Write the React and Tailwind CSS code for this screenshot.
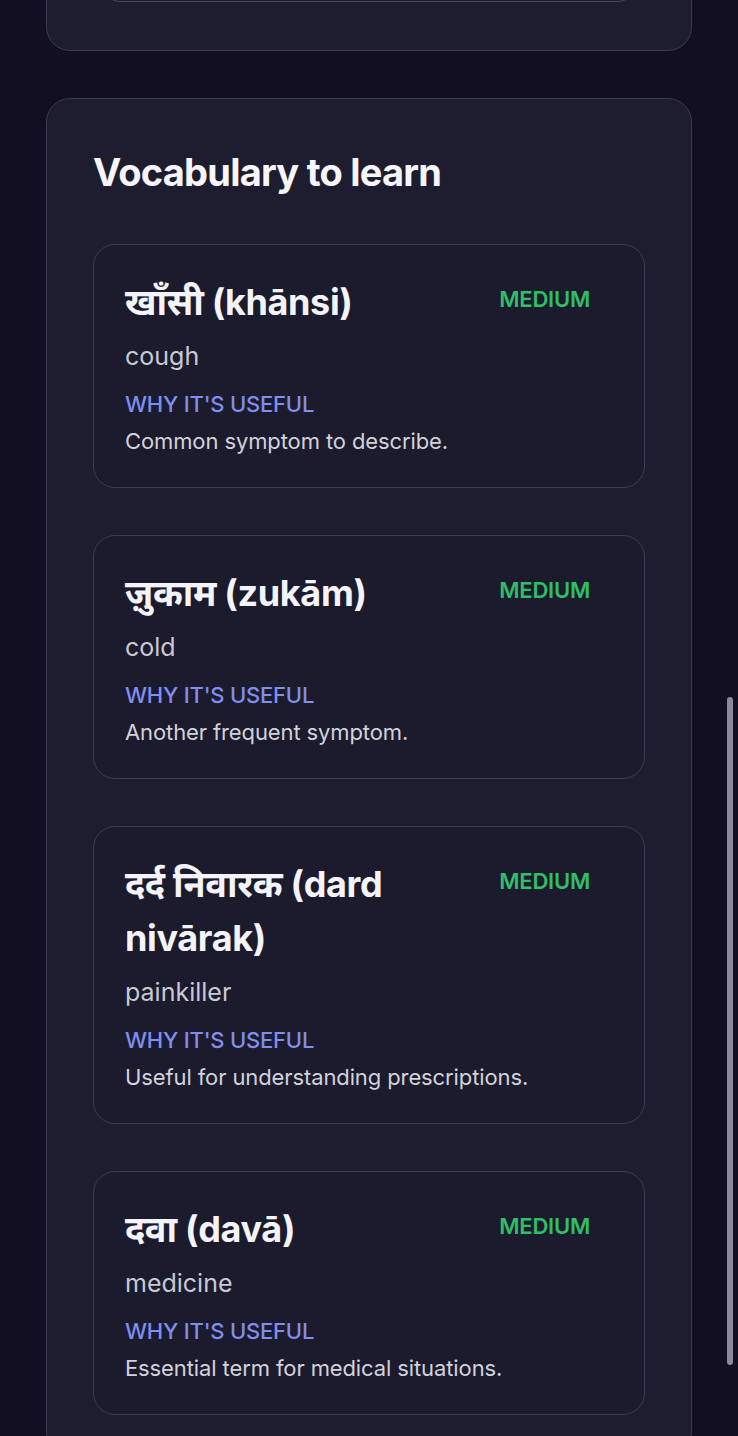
const words = [
  {
    term: "खाँसी (khānsi)",
    meaning: "cough",
    why: "Common symptom to describe.",
  },
  {
    term: "ज़ुकाम (zukām)",
    meaning: "cold",
    why: "Another frequent symptom.",
  },
  {
    term: "दर्द निवारक (dard nivārak)",
    meaning: "painkiller",
    why: "Useful for understanding prescriptions.",
  },
  {
    term: "दवा (davā)",
    meaning: "medicine",
    why: "Essential term for medical situations.",
  },
];

function WordCard({ term, meaning, why }) {
  return (
    <div className="rounded-[22px] border border-[#3a3c55] bg-[#1c1b2d] px-[31px] pt-[30px] pb-[31px]">
      <div className="flex items-start justify-between gap-6">
        <h3 className="flex-1 text-[36px] font-bold leading-[54px] tracking-[-0.01em] text-[#f4f4f8]">
          {term}
        </h3>
        <span className="mt-[8px] mr-[23px] text-[22px] font-semibold leading-[32px] tracking-[-0.01em] text-[#2fbf68]">
          MEDIUM
        </span>
      </div>
      <p className="mt-[9px] text-[25px] leading-[36px] text-[#c9c9d3]">
        {meaning}
      </p>
      <p className="mt-[14px] text-[22px] font-medium leading-[32px] tracking-[-0.01em] text-[#7f8ff0]">
        WHY IT'S USEFUL
      </p>
      <p className="mt-[6px] text-[22px] leading-[30px] tracking-[-0.005em] text-[#d2d2da]">
        {why}
      </p>
    </div>
  );
}

export default function App() {
  return (
    <div
      className="min-h-[1436px] overflow-hidden bg-[#110f21]"
      style={{ fontFamily: "Inter, 'Noto Sans Devanagari', 'Noto Sans', sans-serif" }}
    >
      <div className="mx-[46px] mt-[-147px] flex flex-col gap-[47px]">
        <div className="rounded-[24px] border border-[#3a3b52] bg-[#1e1d2f] px-[55px] py-[48px]">
          <div className="h-[100px] rounded-[18px] border border-[#45465e] bg-[#1e1d2f]" />
        </div>

        <div className="rounded-[24px] border border-[#3a3b52] bg-[#1e1d2f] px-[46px] pt-[51px] pb-[40px]">
          <h2 className="text-[38px] font-bold leading-[44px] tracking-[-0.02em] text-[#f6f6fa]">
            Vocabulary to learn
          </h2>
          <div className="mt-[50px] flex flex-col gap-[47px]">
            {words.map((w) => (
              <WordCard key={w.meaning} {...w} />
            ))}
          </div>
        </div>
      </div>

      <div className="fixed right-[5px] top-[697px] h-[668px] w-[6px] rounded-full bg-[#8b8a9b]" />
    </div>
  );
}
